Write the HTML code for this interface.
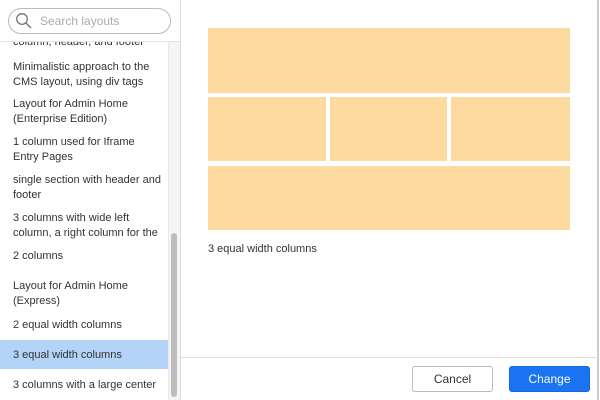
<!DOCTYPE html>
<html><head><style>
*{margin:0;padding:0;box-sizing:border-box}
body{width:600px;height:400px;overflow:hidden;background:#fff;font-family:"Liberation Sans",Arial,sans-serif;font-size:11px;color:#333;position:relative}
.left{position:absolute;left:0;top:0;width:181px;height:400px;border-right:1px solid #ddd;overflow:hidden}
.search{position:absolute;left:0;top:0;width:180px;height:42px;background:#fff;border-bottom:1px solid #e2e2e2;z-index:2}
.sbox{position:absolute;left:8px;top:8px;width:163px;height:26px;border:1px solid #bbb;border-radius:13px;color:#aaa;font-size:12px;padding:5px 0 0 31px}
.track{position:absolute;left:168px;top:42px;width:12px;height:358px;background:#f5f5f5;border-left:1px solid #e8e8e8}
.thumb{position:absolute;left:171px;top:233px;width:6px;height:164px;background:#bdbdbd;border-radius:3px}
.it{position:absolute;left:13px;width:150px;line-height:14.5px;color:#333}
.sel{position:absolute;left:0;top:340px;width:168px;height:29px;background:#b3d3f7}
.right{position:absolute;left:181px;top:0;width:418px;height:400px;border-right:2px solid #ccc}
.b{position:absolute;background:#fddba0}
.foot{position:absolute;left:181px;top:357px;width:417px;border-top:1px solid #ddd;height:43px}
.btn{position:absolute;top:366px;height:26px;border-radius:3px;font-size:12px;text-align:center;line-height:24px}
</style></head><body>
<div class="left">
<div class="search"><div class="sbox">Search layouts</div>
<svg style="position:absolute;left:15px;top:12px" width="18" height="18" viewBox="0 0 18 18"><circle cx="7" cy="7" r="5.3" fill="none" stroke="#777" stroke-width="1.3"/><line x1="11" y1="11" x2="16" y2="16" stroke="#777" stroke-width="1.4"/></svg></div>
<div class="it" style="top:35px">column, header, and footer</div>
<div class="it" style="top:60px">Minimalistic approach to the CMS layout, using div tags</div>
<div class="it" style="top:97px">Layout for Admin Home (Enterprise Edition)</div>
<div class="it" style="top:135px">1 column used for Iframe Entry Pages</div>
<div class="it" style="top:173px">single section with header and footer</div>
<div class="it" style="top:211px">3 columns with wide left column, a right column for the</div>
<div class="it" style="top:249px">2 columns</div>
<div class="it" style="top:279px">Layout for Admin Home (Express)</div>
<div class="it" style="top:318px">2 equal width columns</div>
<div class="sel"></div>
<div class="it" style="top:348px">3 equal width columns</div>
<div class="it" style="top:378px">3 columns with a large center</div>
<div class="track"></div><div class="thumb"></div>
</div>
<div class="right"></div>
<div class="b" style="left:208px;top:28px;width:362px;height:65px"></div>
<div class="b" style="left:208px;top:97px;width:118px;height:64px"></div>
<div class="b" style="left:330px;top:97px;width:117px;height:64px"></div>
<div class="b" style="left:451px;top:97px;width:119px;height:64px"></div>
<div class="b" style="left:208px;top:166px;width:362px;height:64px"></div>
<div style="position:absolute;left:208px;top:243px">3 equal width columns</div>
<div class="foot"></div>
<div class="btn" style="left:412px;width:81px;border:1px solid #bbb;background:#fff;color:#333">Cancel</div>
<div class="btn" style="left:509px;width:81px;background:#1a73f0;color:#fff;border:1px solid #1668dc">Change</div>
</body></html>
